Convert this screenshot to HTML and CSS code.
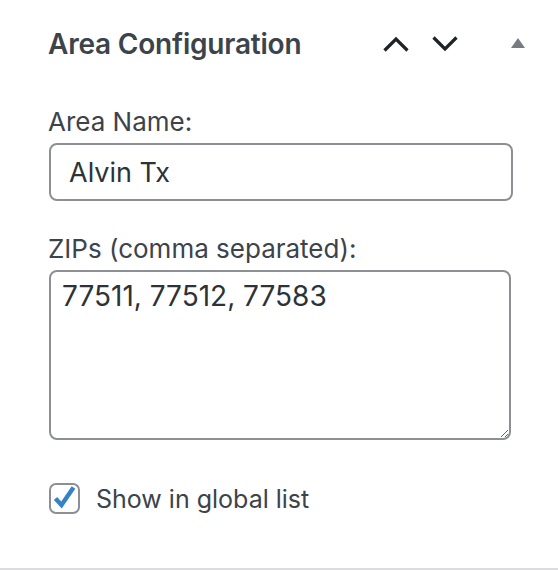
FILE: index.html
```html
<!DOCTYPE html>
<html>
<head>
    <meta charset="utf-8" />
    <title>Area Configuration</title>
    <link rel="stylesheet" href="styles.css">
</head>
<body>
    <div class="postbox">
        <div class="postbox-header">
            <h2 class="hndle">Area Configuration</h2>
            <div class="handle-actions">
                <button class="handle-order" type="button" aria-label="Move up">
                    <svg width="26" height="16" viewBox="0 0 26 16"><path d="M1.5 14.5 L13 3 L24.5 14.5" fill="none" stroke="#1d2327" stroke-width="3.2" /></svg>
                </button>
                <button class="handle-order" type="button" aria-label="Move down">
                    <svg width="26" height="16" viewBox="0 0 26 16"><path d="M1.5 1.5 L13 13 L24.5 1.5" fill="none" stroke="#1d2327" stroke-width="3.2" /></svg>
                </button>
                <button class="handlediv" type="button" aria-label="Toggle panel">
                    <svg width="14" height="10" viewBox="0 0 14 10"><polygon points="0,10 7,0 14,10" fill="#787c82" /></svg>
                </button>
            </div>
        </div>
        <div class="inside">
            <label class="field-label" for="area-name">Area Name:</label>
            <input class="field-input" type="text" id="area-name" value="Alvin Tx" />

            <label class="field-label zips" for="area-zips">ZIPs (comma separated):</label>
            <textarea class="field-textarea" id="area-zips">77511, 77512, 77583</textarea>

            <label class="check-row">
                <span class="check-box">
                    <svg class="check-mark" width="23" height="24" viewBox="0 0 23 24"><path d="M2.5 13.5 L8.5 20 L20.5 2.5" fill="none" stroke="#3582c4" stroke-width="4.4" /></svg>
                </span>
                <span class="check-text">Show in global list</span>
            </label>
        </div>
    </div>
</body>
</html>
```

FILE: styles.css
```css
body {
    margin: 0;
    background: #fff;
    font-family: Inter, "Liberation Sans", sans-serif;
}

.postbox {
    width: 558px;
    height: 570px;
    box-sizing: border-box;
    border-bottom: 2px solid #dcdcde;
}

.postbox-header {
    display: flex;
    align-items: center;
    justify-content: space-between;
    height: 88px;
    padding: 0 33px 0 48px;
}

.hndle {
    margin: 0;
    font-size: 28px;
    font-weight: 600;
    color: #3c434a;
    letter-spacing: -0.2px;
}

.handle-actions {
    display: flex;
    align-items: center;
}

.handle-order,
.handlediv {
    border: 0;
    background: none;
    padding: 0;
    display: flex;
    align-items: center;
}

.handle-order {
    margin-left: 23px;
}

.handlediv {
    margin-left: 53px;
    margin-top: -3px;
}

.inside {
    padding: 18px 44px 0 48px;
}

.field-label {
    display: block;
    font-size: 26px;
    line-height: 32px;
    color: #3c434a;
}

.field-input {
    display: block;
    box-sizing: border-box;
    width: 464px;
    height: 58px;
    margin: 5px 0 0 1px;
    padding: 0 18px;
    border: 2px solid #8c8f94;
    border-radius: 8px;
    font-family: inherit;
    font-size: 27px;
    color: #2c3338;
    outline: none;
}

.zips {
    margin-top: 32px;
}

.field-textarea {
    display: block;
    box-sizing: border-box;
    width: 462px;
    height: 170px;
    margin: 5px 0 0 1px;
    padding: 7px 11px;
    border: 2px solid #8c8f94;
    border-radius: 8px;
    font-family: inherit;
    font-size: 28px;
    line-height: 34px;
    color: #2c3338;
    outline: none;
}

.check-row {
    display: flex;
    align-items: center;
    margin-top: 43px;
    margin-left: 1px;
}

.check-box {
    box-sizing: border-box;
    width: 31px;
    height: 31px;
    border: 2px solid #8c8f94;
    border-radius: 7px;
    display: flex;
    justify-content: center;
}

.check-mark {
    margin-top: 0;
}

.check-text {
    margin-left: 16px;
    font-size: 25px;
    color: #3c434a;
}
```
